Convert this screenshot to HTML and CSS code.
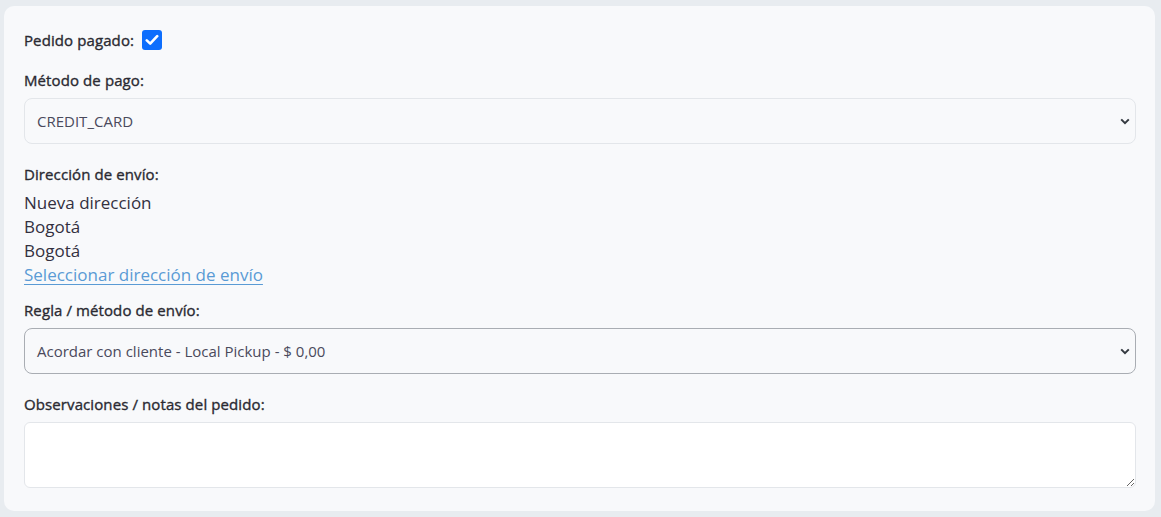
FILE: index.html
```html
<!DOCTYPE html>
<html lang="es">
<head>
<meta charset="utf-8">
<title>Pedido</title>
<link rel="stylesheet" href="styles.css">
</head>
<body>
<div class="card">
  <div class="paid-row">
    <span class="label inline">Pedido pagado:</span>
    <span class="checkbox">
      <svg width="14" height="12" viewBox="0 0 14 12"><polyline points="1.8,6.4 5.2,9.6 12.2,2.2" fill="none" stroke="#fff" stroke-width="2.6" stroke-linecap="round" stroke-linejoin="round"/></svg>
    </span>
  </div>

  <div class="group">
    <div class="label">Método de pago:</div>
    <div class="select-wrap">
      <div class="select light">CREDIT_CARD</div>
      <svg class="chev" width="10" height="7" viewBox="0 0 10 7"><polyline points="1.2,1.4 5,5.2 8.8,1.4" fill="none" stroke="#343a40" stroke-width="2"/></svg>
    </div>
  </div>

  <div class="group address">
    <div class="label">Dirección de envío:</div>
    <div class="addr-line">Nueva dirección</div>
    <div class="addr-line">Bogotá</div>
    <div class="addr-line">Bogotá</div>
    <a class="addr-link" href="#">Seleccionar dirección de envío</a>
  </div>

  <div class="group">
    <div class="label">Regla / método de envío:</div>
    <div class="select-wrap">
      <div class="select dark">Acordar con cliente - Local Pickup - $ 0,00</div>
      <svg class="chev" width="10" height="7" viewBox="0 0 10 7"><polyline points="1.2,1.4 5,5.2 8.8,1.4" fill="none" stroke="#343a40" stroke-width="2"/></svg>
    </div>
  </div>

  <div class="group">
    <div class="label">Observaciones / notas del pedido:</div>
    <textarea class="notes"></textarea>
  </div>
</div>
</body>
</html>
```

FILE: styles.css
```css
* { box-sizing: border-box; }
html, body { margin: 0; }
body {
  background: #e8ecf0;
  padding: 6px 6px 6px 4px;
  font-family: "Open Sans", "Noto Sans", Arial, sans-serif;
  color: #2e2e3a;
}
.card {
  background: #f8f9fb;
  border-radius: 10px;
  padding: 24px 19px 23px 20px;
  height: 505px;
}
.paid-row {
  display: flex;
  align-items: center;
  height: 20px;
  gap: 8px;
}
.label {
  font-size: 15px;
  font-weight: 400;
  line-height: 21px;
  color: #2a2a32;
  letter-spacing: 0.1px;
  -webkit-text-stroke: 0.35px #2a2a32;
  margin-bottom: 7px;
}
.label.inline { margin-bottom: 0; }
.checkbox {
  width: 20px;
  height: 20px;
  border-radius: 3px;
  background: #0d6efd;
  display: flex;
  align-items: center;
  justify-content: center;
}
.group { margin-top: 20px; }
.select-wrap { position: relative; }
.select {
  height: 46px;
  border-radius: 8px;
  padding: 0 12px;
  display: flex;
  align-items: center;
  font-size: 15px;
  color: #4a4a5c;
  background: #f8f9fb;
}
.select.light { border: 1px solid #e3e6ea; }
.select.dark { border: 1px solid #a9adb3; }
.chev {
  position: absolute;
  right: 6px;
  top: 20px;
}
.address .label { margin-bottom: 6px; }
.addr-line {
  font-size: 17px;
  line-height: 24px;
  color: #33303f;
}
.addr-link {
  display: inline-block;
  font-size: 17px;
  line-height: 24px;
  color: #5a9bd5;
  text-decoration: underline;
  text-underline-offset: 3px;
}
.address + .group { margin-top: 13px; }
.notes {
  display: block;
  width: 100%;
  height: 66px;
  border: 1px solid #e3e6ea;
  border-radius: 6px;
  background: #fff;
  resize: vertical;
  font-family: inherit;
}
```
